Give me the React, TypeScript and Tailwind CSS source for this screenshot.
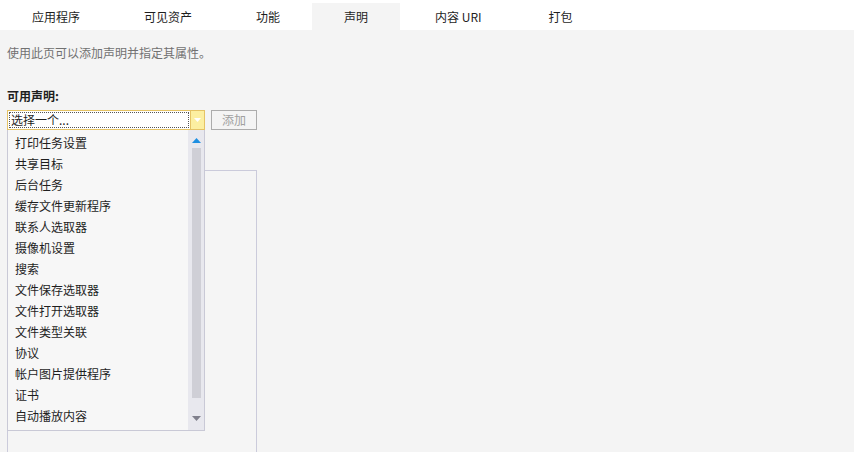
import React from "react";

const tabs = ["应用程序", "可见资产", "功能", "声明", "内容 URI", "打包"];

const items = [
  "打印任务设置",
  "共享目标",
  "后台任务",
  "缓存文件更新程序",
  "联系人选取器",
  "摄像机设置",
  "搜索",
  "文件保存选取器",
  "文件打开选取器",
  "文件类型关联",
  "协议",
  "帐户图片提供程序",
  "证书",
  "自动播放内容",
];

export default function App() {
  return (
    <div
      className="w-[854px] h-[452px] overflow-hidden bg-[#f4f4f4] text-[12px] text-[#1e1e1e]"
      style={{ fontFamily: '"Noto Sans CJK SC", "Noto Sans", sans-serif' }}
    >
      {/* Tab strip */}
      <div className="h-[30px] bg-white flex items-end">
        {tabs.map((t) => (
          <div
            key={t}
            className={`h-[27px] flex items-center justify-center leading-none ${
              t === "内容 URI" ? "px-[35px]" : "px-8"
            } ${t === "声明" ? "bg-[#f4f4f4]" : ""}`}
          >
            {t}
          </div>
        ))}
      </div>

      <div className="px-[7px] pt-[15px]">
        <p className="text-[#717171] leading-[16px]">使用此页可以添加声明并指定其属性。</p>

        <p className="mt-[27px] font-bold leading-[16px]">可用声明:</p>

        <div className="mt-[6px] flex items-start gap-[6px]">
          <div className="relative">
            {/* Combobox */}
            <div className="w-[198px] h-[20px] border border-[#e5c365] bg-white flex">
              <div className="flex-1 m-[1px] border border-dotted border-[#555] flex items-center pl-[1px] leading-none">
                选择一个...
              </div>
              <div className="w-[14px] bg-[#fcefa1] border-l border-[#e5c365] flex items-center justify-center">
                <svg width="7" height="4" viewBox="0 0 7 4">
                  <path d="M0 0h7L3.5 4z" fill="#ffffff" />
                </svg>
              </div>
            </div>

            {/* Open dropdown */}
            <div className="absolute left-0 top-[20px] w-[198px] h-[301px] border border-t-0 border-[#c9c9d6] bg-[#f7f7f7] flex z-10">
              <div className="flex-1 pl-[7px] pt-[2px]">
                {items.map((it) => (
                  <div key={it} className="h-[21px] flex items-center leading-none">
                    {it}
                  </div>
                ))}
              </div>
              <div className="w-[16px] bg-[#e8e8ee] flex flex-col items-center">
                <svg width="9" height="5" viewBox="0 0 9 5" className="mt-[8px]">
                  <path d="M4.5 0L9 5H0z" fill="#1e8fe1" />
                </svg>
                <div className="mt-[5px] w-[9px] h-[250px] bg-[#cfcfd6]" />
                <svg width="9" height="5" viewBox="0 0 9 5" className="mt-[18px]">
                  <path d="M0 0h9L4.5 5z" fill="#80808c" />
                </svg>
              </div>
            </div>
          </div>

          <button className="w-[46px] h-[20px] border border-[#acacac] bg-[#f4f4f4] text-[#a0a0a0] flex items-center justify-center leading-none">
            添加
          </button>
        </div>

        {/* Declarations list box behind the dropdown */}
        <div className="mt-[40px] w-[250px] h-[300px] border border-[#cbcbdb] bg-[#f5f5f5]" />
      </div>
    </div>
  );
}
